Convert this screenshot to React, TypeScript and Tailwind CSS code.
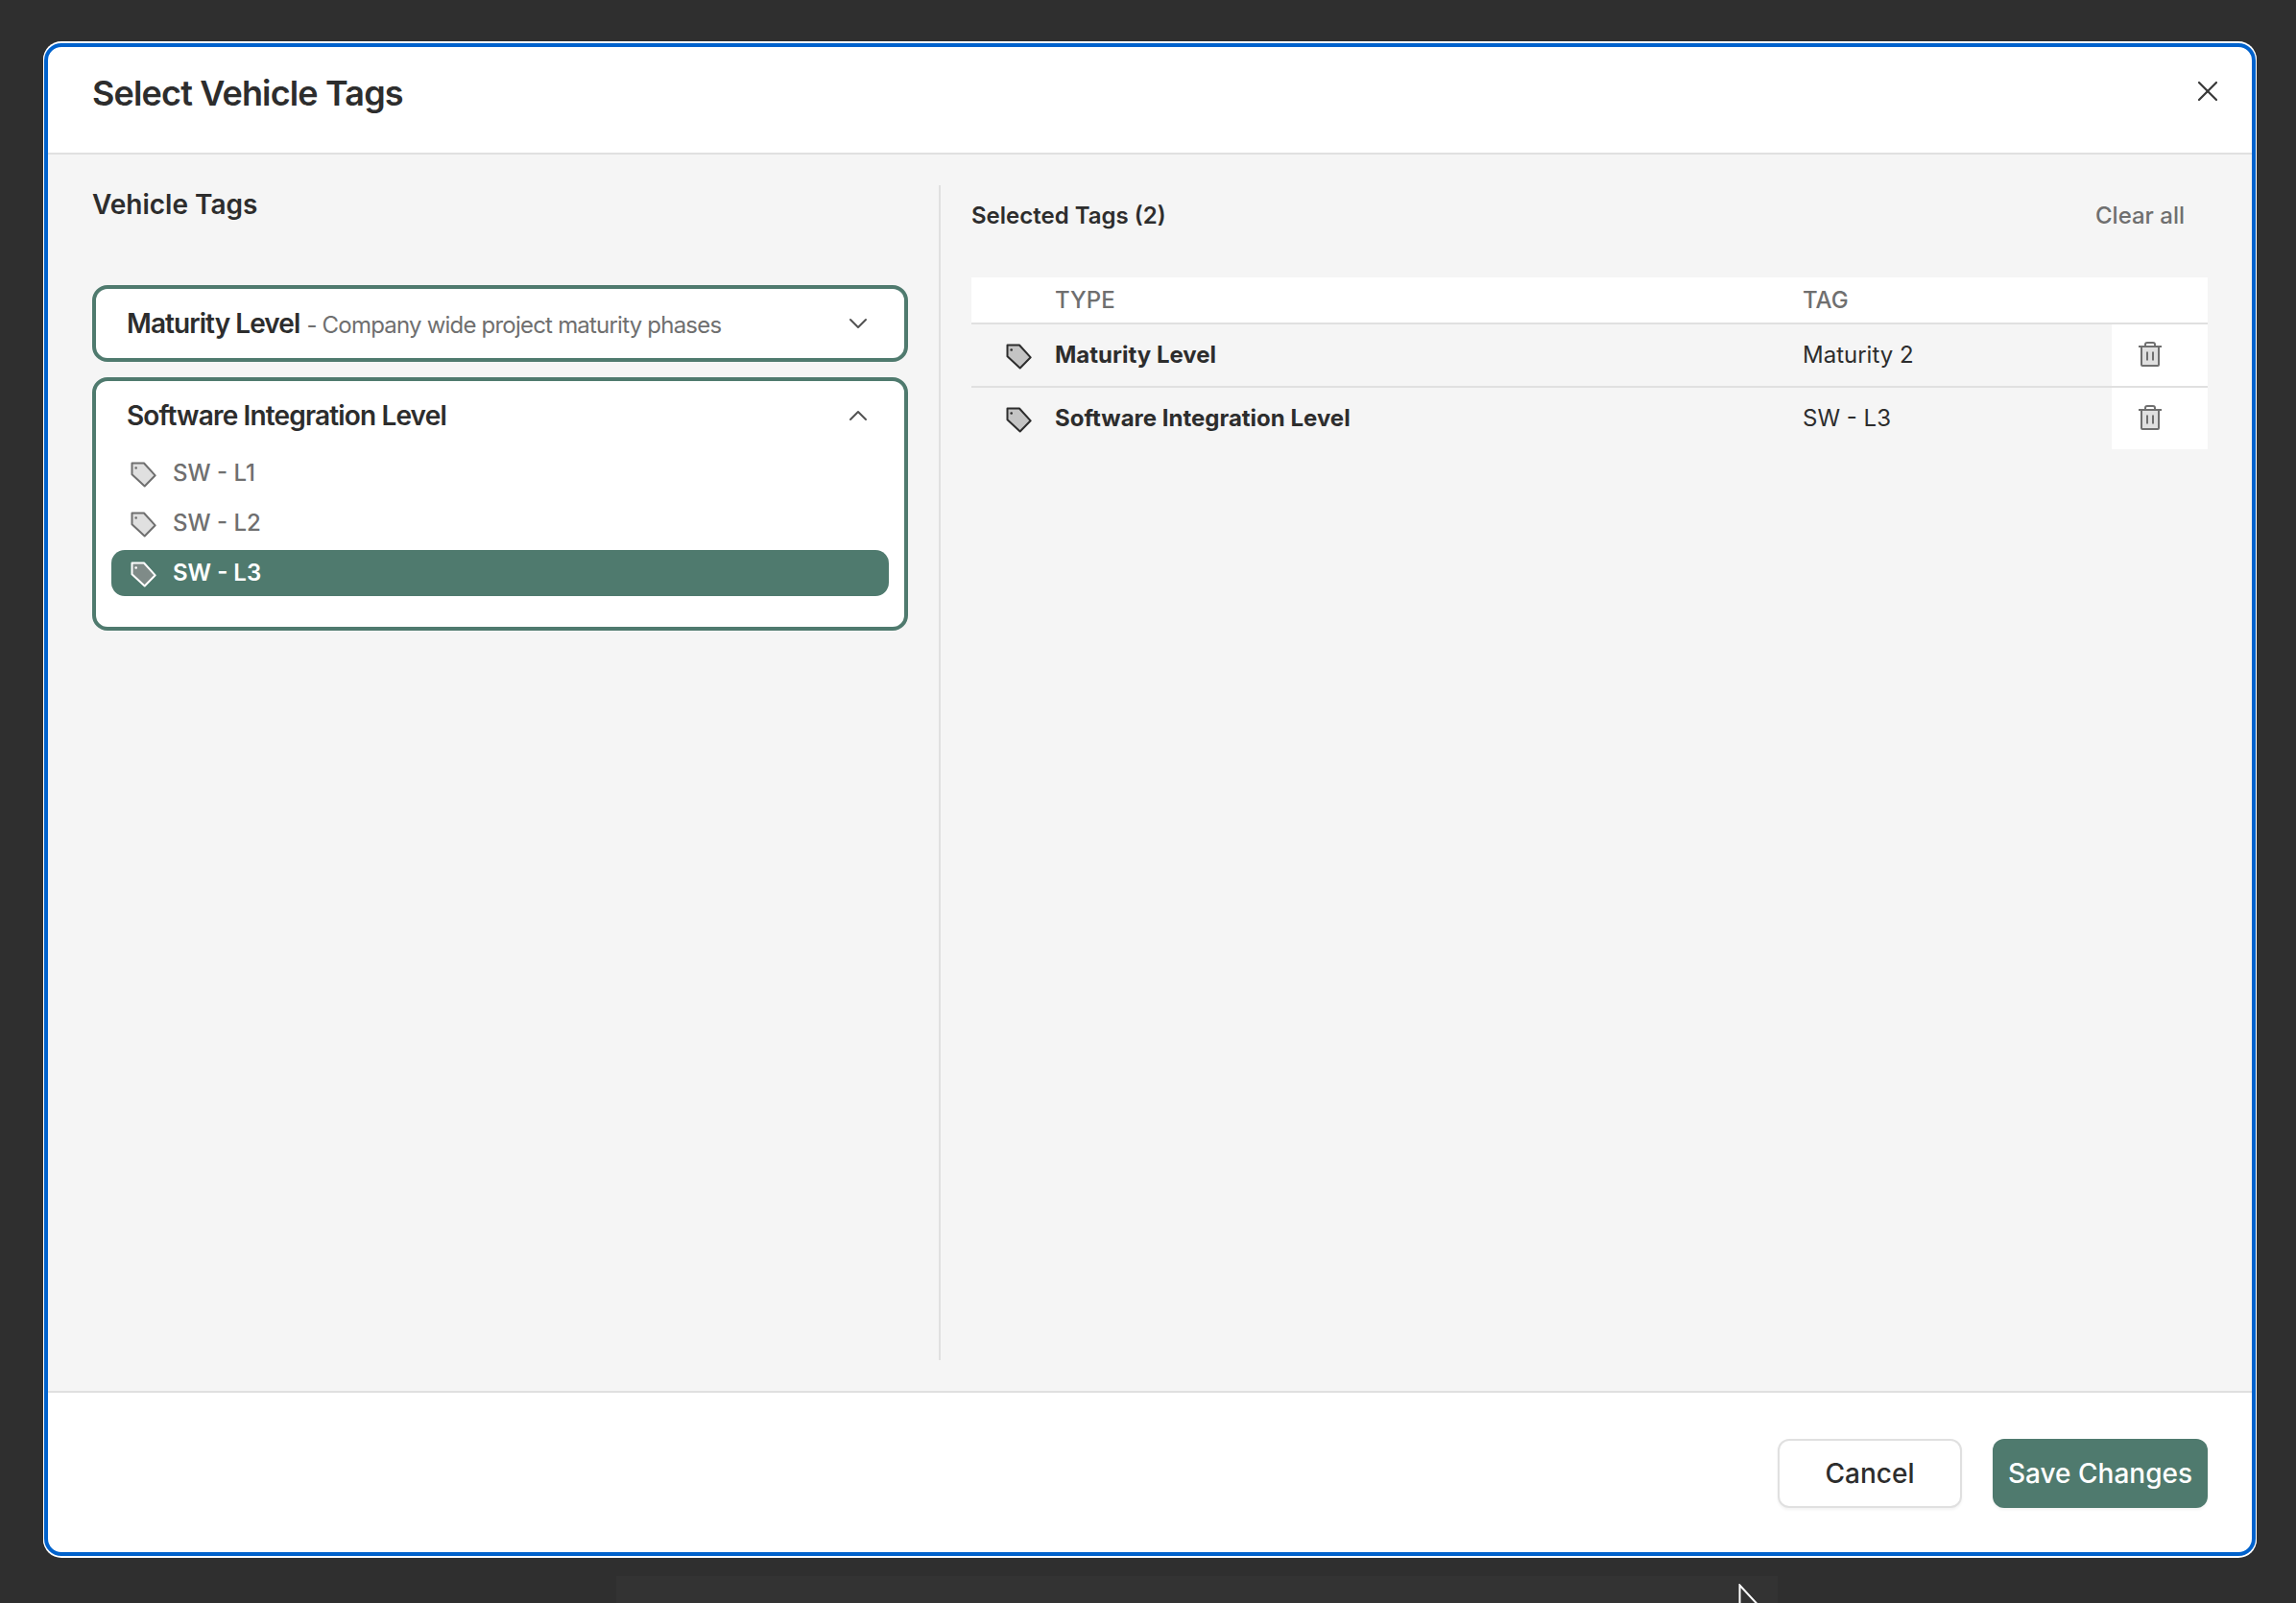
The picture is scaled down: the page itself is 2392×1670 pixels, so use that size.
import { X, ChevronDown, ChevronUp } from 'lucide-react';

const TagIcon = ({ fill, stroke }: { fill: string; stroke: string }) => (
  <svg width="27" height="27" viewBox="0 0 27 27" className="mt-[3px] shrink-0">
    <path
      d="M1.5 1.5L14 1.5L25.7 14.3L14.7 25.5L1.5 13.2Z"
      fill={fill}
      stroke={stroke}
      strokeWidth="2"
      strokeLinejoin="round"
    />
    <circle cx="5.7" cy="6.5" r="1.3" fill={stroke} />
  </svg>
);

const TrashIcon = () => (
  <svg width="24" height="26" viewBox="0 0 24 26" fill="none" stroke="#6f6f6f" strokeWidth="2" className="mb-[2px]">
    <path d="M3 5H21V24C21 24.6 20.6 25 20 25H4C3.4 25 3 24.6 3 24V5Z" fill="#e0e0e0" />
    <path d="M0 5H24M7 5V3C7 1.9 7.9 1 9 1H15C16.1 1 17 1.9 17 3V5M9 10.5V19.5M15 10.5V19.5" />
  </svg>
);

const rows = [
  { type: 'Maturity Level', tag: 'Maturity 2' },
  { type: 'Software Integration Level', tag: 'SW - L3' },
];

const levels = ['SW - L1', 'SW - L2', 'SW - L3'];

export default function App() {
  return (
    <div className="relative h-[1670px] w-[2392px] overflow-hidden bg-[#2f2f2f] pl-[46px] pt-[45px] font-['Inter',sans-serif] text-[#2d2d2d]">
      <div className="flex h-[1576px] w-[2304px] flex-col overflow-hidden rounded-[18px] border-4 border-[#0062cc] bg-white shadow-[0_0_0_1px_#ffffff,0_1px_0_1px_#ffffff,0_-1px_0_1px_#ffffff]">
        <div className="flex h-[112px] shrink-0 items-start justify-between border-b-2 border-[#e0e0e0] pl-[46px] pr-[28px]">
          <h1 className="mt-[26px] text-[36px] leading-[44px] font-semibold tracking-[-0.85px]">Select Vehicle Tags</h1>
          <button className="mt-[28px] text-[#3a3a3a]">
            <X size={36} strokeWidth={1.5} />
          </button>
        </div>

        <div className="flex min-h-0 flex-1 bg-[#f5f5f5] py-[32px]">
          <div className="w-[930px] shrink-0 border-r-2 border-[#e0e0e0] pl-[46px] pr-[32px]">
            <h2 className="h-[104px] pt-[2px] text-[28px] leading-[36px] font-semibold">Vehicle Tags</h2>
            <div className="flex flex-col gap-[16px]">
              <div className="flex h-[80px] items-center justify-between rounded-[16px] border-4 border-[#4f7a6e] bg-white pl-[32px] pr-[32px]">
                <div className="flex items-baseline">
                  <span className="text-[28px] font-semibold tracking-[-0.033em]">Maturity Level</span>
                  <span className="ml-[7px] text-[24px] tracking-[-0.033em] text-[#6f6f6f]">- Company wide project maturity phases</span>
                </div>
                <ChevronDown size={32} strokeWidth={1.5} className="text-[#525252]" />
              </div>

              <div className="h-[264px] rounded-[16px] border-4 border-[#4f7a6e] bg-white px-[16px]">
                <div className="flex h-[72px] items-center justify-between pl-[16px] pr-[16px]">
                  <span className="text-[28px] font-semibold tracking-[-0.03em]">Software Integration Level</span>
                  <ChevronUp size={32} strokeWidth={1.5} className="text-[#525252]" />
                </div>
                <div className="flex flex-col gap-[4px]">
                  {levels.map((level) => {
                    const active = level === 'SW - L3';
                    return (
                      <div
                        key={level}
                        className={
                          active
                            ? 'flex h-[48px] items-center gap-[17px] rounded-[14px] bg-[#4f7a6e] pl-[20px] text-[24px] font-semibold text-white'
                            : 'flex h-[48px] items-center gap-[17px] rounded-[14px] pl-[20px] text-[24px] font-medium text-[#6f6f6f]'
                        }
                      >
                        <TagIcon fill={active ? '#7f8b88' : '#e0e0e0'} stroke={active ? '#ffffff' : '#6f6f6f'} />
                        <span>{level}</span>
                      </div>
                    );
                  })}
                </div>
              </div>
            </div>
          </div>

          <div className="min-w-0 flex-1 pl-[32px] pr-[46px]">
            <div className="flex h-[64px] items-center justify-between pr-[24px] text-[24px]">
              <span className="font-semibold">Selected Tags (2)</span>
              <button className="font-medium text-[#6f6f6f]">Clear all</button>
            </div>
            <div className="mt-[32px]">
              <div className="flex h-[49px] items-center border-b-2 border-[#e0e0e0] bg-white text-[24px] font-medium text-[#6f6f6f]">
                <span className="w-[866px] pl-[87px]">TYPE</span>
                <span>TAG</span>
              </div>
              {rows.map((row, i) => (
                <div key={row.type} className={i === 0 ? 'flex h-[66px] border-b-2 border-[#e0e0e0]' : 'flex h-[64px]'}>
                  <div className="flex w-[866px] items-center pl-[36px] text-[24px] font-bold">
                    <TagIcon fill="#c4c4c4" stroke="#2d2d2d" />
                    <span className="ml-[24px]">{row.type}</span>
                  </div>
                  <div className="flex flex-1 items-center text-[24px]">{row.tag}</div>
                  <div className="flex w-[100px] items-center bg-white pl-[28px]">
                    <TrashIcon />
                  </div>
                </div>
              ))}
            </div>
          </div>
        </div>

        <div className="flex h-[168px] shrink-0 items-start justify-end gap-[32px] border-t-2 border-[#e0e0e0] pr-[46px] pt-[48px] text-[28px] font-medium">
          <button className="h-[72px] w-[192px] rounded-[12px] border-2 border-[#e0e0e0] bg-white shadow-[0_2px_3px_rgba(0,0,0,0.05)]">Cancel</button>
          <button className="h-[72px] w-[224px] rounded-[12px] bg-[#4f7a6e] text-white shadow-[0_2px_3px_rgba(0,0,0,0.05)]">Save Changes</button>
        </div>
      </div>

      <div className="ml-[596px] mt-[21px] h-[30px] w-[1210px] bg-[#333333]" />
      <svg width="30" height="20" viewBox="0 0 30 20" className="absolute left-[1811px] top-[1650px]">
        <path d="M1.5 30V1.5L26 28" fill="#333333" stroke="#ffffff" strokeWidth="2" />
      </svg>
    </div>
  );
}
